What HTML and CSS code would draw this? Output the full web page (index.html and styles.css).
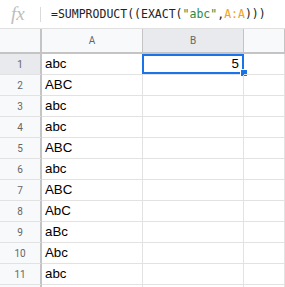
FILE: index.html
```html
<!DOCTYPE html>
<html lang="en">
<head>
    <meta charset="UTF-8">
    <title>Sheet</title>
    <link rel="stylesheet" href="styles.css">
</head>
<body>
    <div class="formula-bar">
        <span class="fx">fx</span>
        <span class="divider"></span>
        <span class="formula">=SUMPRODUCT((EXACT(<span class="str">"abc"</span>,<span class="ref">A:A</span>)))</span>
    </div>

    <div class="sheet">
        <div class="corner"></div>
        <div class="col-head">A</div>
        <div class="col-head active">B</div>
        <div class="col-head"></div>

        <div class="row-head active">1</div>
        <div class="cell">abc</div>
        <div class="cell num selected">5<span class="sel-box"></span><span class="handle"></span></div>
        <div class="cell"></div>

        <div class="row-head">2</div><div class="cell">ABC</div><div class="cell"></div><div class="cell"></div>
        <div class="row-head">3</div><div class="cell">abc</div><div class="cell"></div><div class="cell"></div>
        <div class="row-head">4</div><div class="cell">abc</div><div class="cell"></div><div class="cell"></div>
        <div class="row-head">5</div><div class="cell">ABC</div><div class="cell"></div><div class="cell"></div>
        <div class="row-head">6</div><div class="cell">abc</div><div class="cell"></div><div class="cell"></div>
        <div class="row-head">7</div><div class="cell">ABC</div><div class="cell"></div><div class="cell"></div>
        <div class="row-head">8</div><div class="cell">AbC</div><div class="cell"></div><div class="cell"></div>
        <div class="row-head">9</div><div class="cell">aBc</div><div class="cell"></div><div class="cell"></div>
        <div class="row-head">10</div><div class="cell">Abc</div><div class="cell"></div><div class="cell"></div>
        <div class="row-head">11</div><div class="cell">abc</div><div class="cell"></div><div class="cell"></div>
        <div class="row-head"></div><div class="cell"></div><div class="cell"></div><div class="cell"></div>
    </div>
</body>
</html>
```

FILE: styles.css
```css
* {
    margin: 0;
    padding: 0;
    box-sizing: border-box;
}

body {
    font-family: 'Liberation Sans', Arial, sans-serif;
    background: white;
    width: 285px;
    height: 287px;
    overflow: hidden;
    color: #000;
}

/* formula bar */
.formula-bar {
    display: flex;
    align-items: center;
    height: 29px;
    border-bottom: 1px solid #e0e0e0;
}

.fx {
    width: 40px;
    padding-left: 11px;
    font-family: 'Liberation Serif', serif;
    font-style: italic;
    font-size: 19px;
    color: #bdbdbd;
    line-height: 1;
    margin-top: -2px;
}

.divider {
    width: 1px;
    height: 15px;
    background: #dadada;
}

.formula {
    margin-left: 10px;
    font-family: 'DejaVu Sans Mono', monospace;
    font-size: 11.5px;
    color: #222;
}

.formula .str {
    color: #2e8b3a;
}

.formula .ref {
    color: #f2a316;
}

/* grid */
.sheet {
    display: grid;
    grid-template-columns: 42px 101px 101px 1fr;
    grid-template-rows: 25px repeat(12, 21px);
    height: 258px;
    overflow: hidden;
}

.corner {
    background: #f8f9fa;
    border-right: 2px solid #c4c4c4;
    border-bottom: 2px solid #c4c4c4;
}

.col-head {
    background: #f8f9fa;
    border-right: 1px solid #c4c4c4;
    border-bottom: 2px solid #c4c4c4;
    display: flex;
    align-items: center;
    justify-content: center;
    font-family: Roboto, sans-serif;
    font-size: 10px;
    color: #666;
    padding-bottom: 1px;
}

.col-head.active,
.row-head.active {
    background: #e8eaed;
}

.row-head {
    background: #f8f9fa;
    border-right: 2px solid #c4c4c4;
    border-bottom: 1px solid #e2e2e2;
    display: flex;
    align-items: center;
    justify-content: center;
    font-family: Roboto, sans-serif;
    font-size: 10px;
    color: #666;
}

.cell {
    position: relative;
    border-right: 1px solid #e2e2e2;
    border-bottom: 1px solid #e2e2e2;
    font-size: 13.3px;
    line-height: 20px;
    padding: 0 3px;
}

.cell.num {
    text-align: right;
    padding-right: 4px;
}

.sel-box {
    position: absolute;
    left: -1px;
    top: 0;
    width: 102px;
    height: 20px;
    border: 2px solid #1a73e8;
}

.handle {
    position: absolute;
    left: 97px;
    top: 15px;
    width: 6px;
    height: 6px;
    background: #1a73e8;
    border: 1px solid white;
    box-sizing: content-box;
}
```
